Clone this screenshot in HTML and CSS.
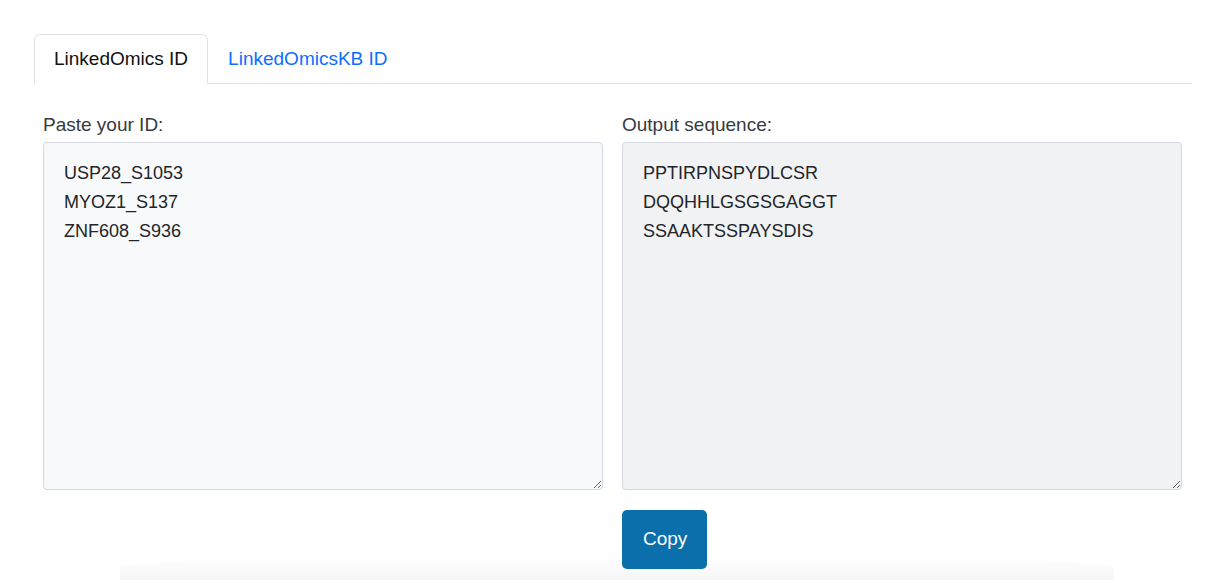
FILE: index.html
```html
<!DOCTYPE html>
<html lang="en">
<head>
    <meta charset="UTF-8">
    <title>ID converter</title>
    <link rel="stylesheet" href="styles.css">
</head>
<body>
    <div class="pagina">
        <ul class="pestanas">
            <li class="pestana activa">LinkedOmics ID</li>
            <li class="pestana">LinkedOmicsKB ID</li>
        </ul>

        <div class="panel">
            <div class="columnas">
                <div class="columna">
                    <label class="etiqueta" for="entrada">Paste your ID:</label>
                    <textarea id="entrada" class="caja">USP28_S1053
MYOZ1_S137
ZNF608_S936</textarea>
                </div>
                <div class="columna">
                    <label class="etiqueta" for="salida">Output sequence:</label>
                    <textarea id="salida" class="caja caja-salida" readonly>PPTIRPNSPYDLCSR
DQQHHLGSGSGAGGT
SSAAKTSSPAYSDIS</textarea>
                    <div class="acciones">
                        <button class="boton">Copy</button>
                    </div>
                </div>
            </div>
        </div>
    </div>
    <div class="pie"></div>
</body>
</html>
```

FILE: styles.css
```css
body {
    margin: 0;
    font-family: "Liberation Sans", Arial, sans-serif;
    font-size: 19px;
    color: #212529;
    background-color: white;
    overflow: hidden;
}

.pagina {
    padding: 34px 32px 0 34px;
}

.pestanas {
    display: flex;
    list-style: none;
    margin: 0;
    padding: 0;
    border-bottom: 1px solid #dee2e6;
}

.pestana {
    padding: 10px 19px 10px 19px;
    line-height: 28px;
    color: #0d6efd;
    border: 1px solid transparent;
    border-top-left-radius: 6px;
    border-top-right-radius: 6px;
    margin-bottom: -1px;
}

.pestana.activa {
    color: #111;
    background-color: white;
    border-color: #dee2e6 #dee2e6 white;
}

.panel {
    padding: 27px 10px 0 9px;
}

.columnas {
    display: flex;
    gap: 19px;
}

.columna {
    width: 560px;
    display: flex;
    flex-direction: column;
}

.etiqueta {
    line-height: 28px;
    color: #373a3e;
    margin-bottom: 3px;
}

.caja {
    box-sizing: border-box;
    height: 348px;
    padding: 16px 20px 15px 20px;
    font-family: inherit;
    font-size: 18px;
    line-height: 29px;
    color: #212529;
    background-color: #f8f9fa;
    border: 1px solid #d4d7e1;
    border-radius: 4px;
    resize: vertical;
    outline: none;
}

.caja-salida {
    background-color: #f1f2f4;
}

.acciones {
    margin-top: 20px;
}

.boton {
    font-family: inherit;
    font-size: 19px;
    line-height: 28px;
    padding: 15px 20px 16px 21px;
    height: 59px;
    color: white;
    background-color: #0a6faa;
    border: none;
    border-radius: 5px;
    cursor: pointer;
}

.pie {
    margin: -14px 110px 0 120px;
    height: 25px;
    border-radius: 50% 50% 0 0;
    background: linear-gradient(to bottom, rgba(0, 0, 0, 0), rgba(0, 0, 0, 0.035));
}
```
